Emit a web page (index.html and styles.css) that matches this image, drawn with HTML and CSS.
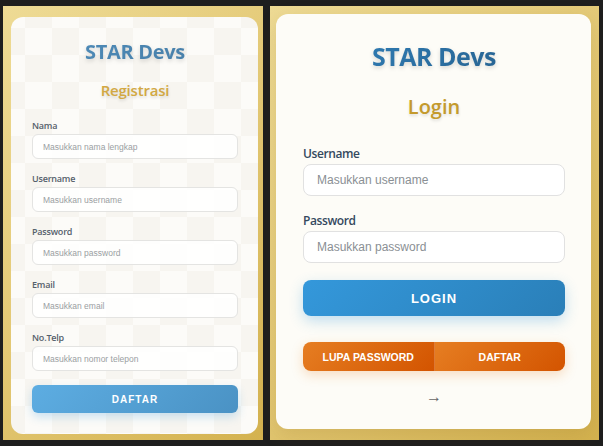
FILE: index.html
```html
<!DOCTYPE html>
<html lang="id">
<head>
<meta charset="utf-8">
<title>STAR Devs</title>
<link rel="stylesheet" href="styles.css">
</head>
<body>
<div class="stage">
  <section class="panel panel-left">
    <div class="card card-reg">
      <h1 class="brand brand-sm">STAR Devs</h1>
      <h2 class="subtitle subtitle-sm">Registrasi</h2>
      <form class="form-sm">
        <div class="field-sm">
          <label class="label-sm">Nama</label>
          <input class="input-sm" type="text" placeholder="Masukkan nama lengkap">
        </div>
        <div class="field-sm">
          <label class="label-sm">Username</label>
          <input class="input-sm" type="text" placeholder="Masukkan username">
        </div>
        <div class="field-sm">
          <label class="label-sm">Password</label>
          <input class="input-sm" type="password" placeholder="Masukkan password">
        </div>
        <div class="field-sm">
          <label class="label-sm">Email</label>
          <input class="input-sm" type="email" placeholder="Masukkan email">
        </div>
        <div class="field-sm">
          <label class="label-sm">No.Telp</label>
          <input class="input-sm" type="text" placeholder="Masukkan nomor telepon">
        </div>
        <button class="btn-sm" type="button">DAFTAR</button>
      </form>
    </div>
  </section>
  <section class="panel panel-right">
    <div class="card card-login">
      <h1 class="brand">STAR Devs</h1>
      <h2 class="subtitle">Login</h2>
      <form class="form">
        <div class="field">
          <label class="label">Username</label>
          <input class="input" type="text" placeholder="Masukkan username">
        </div>
        <div class="field">
          <label class="label">Password</label>
          <input class="input" type="password" placeholder="Masukkan password">
        </div>
        <button class="btn-login" type="button">LOGIN</button>
        <div class="btn-group">
          <button class="btn-orange" type="button">LUPA PASSWORD</button>
          <button class="btn-orange" type="button">DAFTAR</button>
        </div>
        <div class="arrow">→</div>
      </form>
    </div>
  </section>
</div>
</body>
</html>
```

FILE: styles.css
```css
* { box-sizing: border-box; }
html, body { margin: 0; padding: 0; }
body {
  width: 603px;
  height: 446px;
  background: #1e1e1e;
  font-family: "Open Sans", "Noto Sans", sans-serif;
  overflow: hidden;
}
.stage {
  display: flex;
  gap: 7px;
  padding: 6px 4px 6px 3px;
  height: 446px;
}
.panel {
  background: linear-gradient(135deg, #eedb95 0%, #e3c874 50%, #d4b24f 100%);
}
.panel-left {
  width: 260px;
  padding: 11px 5px 6px 8px;
}
.panel-right {
  flex: 1;
  padding: 8px 8px 11px 6px;
}
.card {
  height: 100%;
  border-radius: 12px;
}
.card-login {
  background: #fdfcf7;
  padding: 26px 26px 0 27px;
  box-shadow: 0 6px 20px rgba(120, 90, 20, 0.15);
}
.card-reg {
  background-color: #fcfbf8;
  background-image:
    conic-gradient(#f7f5f0 25%, transparent 0 50%, #f7f5f0 0 75%, transparent 0);
  background-size: 54px 54px;
  background-position: -13px -16px;
  padding: 23px 20px 0 21px;
}
h1, h2 { margin: 0; text-align: center; }
.brand {
  font-size: 25px;
  line-height: 32px;
  font-weight: 700;
  color: #2a6d9e;
  background: linear-gradient(135deg, #3182bd, #245b86);
  -webkit-background-clip: text;
  background-clip: text;
  -webkit-text-fill-color: transparent;
  filter: drop-shadow(0 2px 2px rgba(0, 0, 0, 0.15));
  letter-spacing: -0.5px;
}
.subtitle {
  margin-top: 22px;
  font-size: 20px;
  line-height: 26px;
  font-weight: 600;
  color: #c49a2c;
  text-shadow: 0 2px 3px rgba(0, 0, 0, 0.12);
}
.form { margin-top: 25px; }
.field { margin-bottom: 16px; }
.label {
  display: block;
  font-size: 12px;
  line-height: 17px;
  font-weight: 600;
  color: #34495e;
  letter-spacing: -0.4px;
  margin-bottom: 2px;
}
.input {
  display: block;
  width: 100%;
  height: 32px;
  border: 1.5px solid #e1e1e1;
  border-radius: 8px;
  background: #fff;
  padding: 0 13px;
  font-family: "Liberation Sans", Arial, sans-serif;
  font-size: 12px;
  color: #333;
}
.input::placeholder { color: #8a8f94; }
.btn-login {
  display: block;
  width: 100%;
  height: 36px;
  margin-top: 17px;
  border: 0;
  border-radius: 8px;
  background: linear-gradient(135deg, #3498db, #2a7fb8);
  color: #fff;
  font-family: "Liberation Sans", Arial, sans-serif;
  font-weight: 700;
  font-size: 13px;
  letter-spacing: 1px;
  box-shadow: 0 5px 14px rgba(52, 152, 219, 0.3);
}
.btn-group {
  display: flex;
  margin-top: 26px;
  height: 29px;
  border-radius: 8px;
  overflow: hidden;
  box-shadow: 0 4px 12px rgba(230, 126, 34, 0.25);
}
.btn-orange {
  flex: 1;
  border: 0;
  background: linear-gradient(135deg, #e67e22, #d35400);
  color: #fff;
  font-family: "Liberation Sans", Arial, sans-serif;
  font-weight: 700;
  font-size: 10.5px;
  letter-spacing: 0;
}
.btn-orange + .btn-orange { border-left: 1px solid rgba(255, 255, 255, 0.2); }
.arrow {
  margin-top: 15px;
  text-align: center;
  font-size: 16px;
  line-height: 20px;
  color: #666;
}

/* registration card (smaller scale) */
.brand-sm {
  font-size: 20px;
  line-height: 24px;
  color: #4c87b3;
  letter-spacing: -0.3px;
  background: linear-gradient(135deg, #4f8dbb, #467ca5);
  -webkit-background-clip: text;
  background-clip: text;
  -webkit-text-fill-color: transparent;
}
.subtitle-sm {
  margin-top: 16px;
  font-size: 15px;
  line-height: 20px;
  color: #d2a843;
  letter-spacing: -0.2px;
}
.form-sm { margin-top: 20px; }
.field-sm { margin-bottom: 14px; }
.label-sm {
  display: block;
  font-size: 9px;
  line-height: 12px;
  font-weight: 600;
  color: #55606b;
  letter-spacing: -0.2px;
  margin-bottom: 2px;
}
.input-sm {
  display: block;
  width: 100%;
  height: 25px;
  border: 1px solid #e4e4e2;
  border-radius: 6px;
  background: rgba(255, 255, 255, 0.85);
  padding: 0 10px;
  font-family: "Liberation Sans", Arial, sans-serif;
  font-size: 8.5px;
  color: #333;
}
.input-sm::placeholder { color: #9a9ea2; }
.btn-sm {
  display: block;
  width: 100%;
  height: 28px;
  margin-top: 1px;
  border: 0;
  border-radius: 6px;
  background: linear-gradient(135deg, #5dade2, #4a92c4);
  color: #fff;
  font-family: "Liberation Sans", Arial, sans-serif;
  font-weight: 700;
  font-size: 10px;
  letter-spacing: 1px;
  box-shadow: 0 4px 10px rgba(52, 152, 219, 0.25);
}
```
